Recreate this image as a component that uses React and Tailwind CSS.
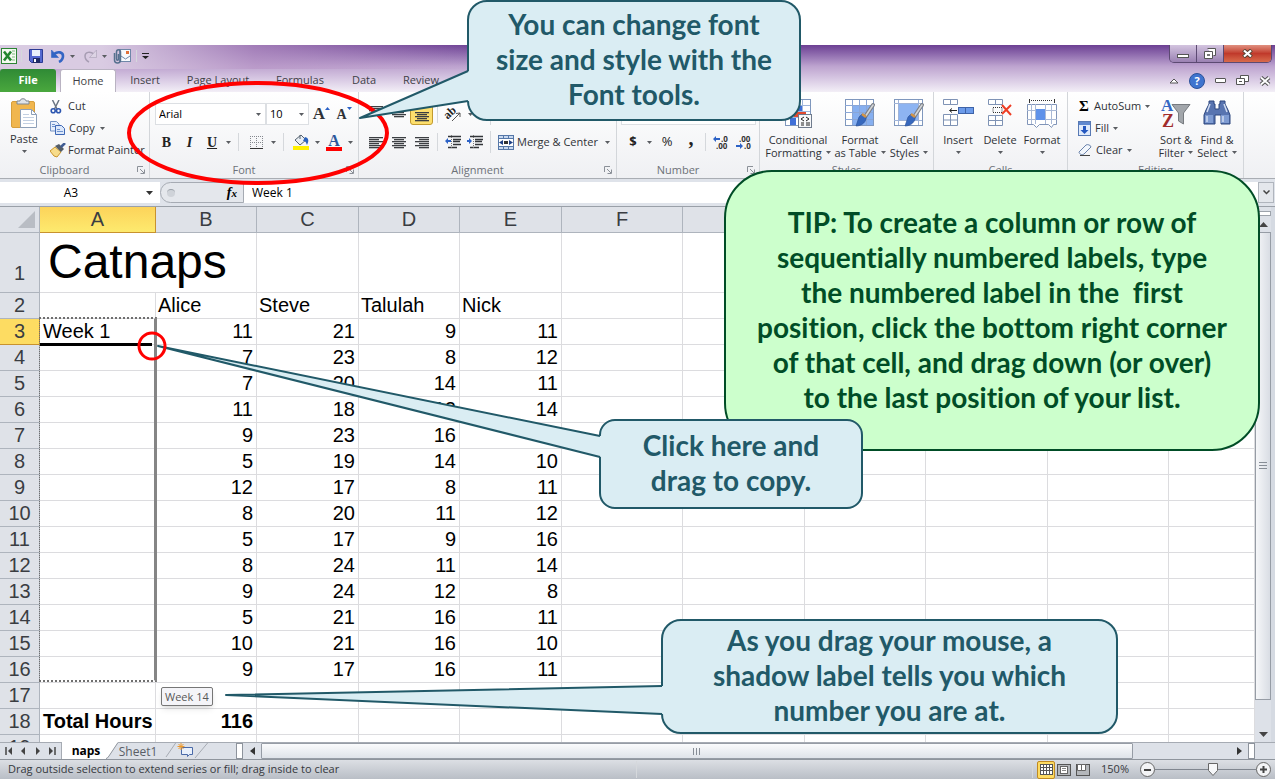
import React from 'react';

const Caret = ({ className = '' }) => (
  <svg className={'shrink-0 ' + className} width="5" height="3" viewBox="0 0 5 3" aria-hidden="true">
    <path d="M0 0h5L2.500 3z" fill="#5a5d62" />
  </svg>
);
const Sep = ({ className = '' }) => <span className={'w-px shrink-0 bg-[#d5d8dc] ' + className} />;

/* ---------- icons ---------- */
const ExcelIcon = () => (
  <svg width="16" height="16" viewBox="0 0 16 16">
    <rect x=".5" y=".5" width="15" height="15" fill="#f4faf1" stroke="#2c8434" />
    <path d="M11 3h3M11 6h3M11 9h3M11 12h3" stroke="#7fb97f" />
    <path d="M3 3.500l7 9M10 3.500l-7 9" stroke="#23862f" strokeWidth="2.600" />
  </svg>
);
const SaveIcon = () => (
  <svg width="14" height="14" viewBox="0 0 14 14">
    <path d="M.5.5h13v13h-11l-2-2z" fill="#5468d0" stroke="#2b3a94" />
    <rect x="3" y="1" width="8" height="6" fill="#e9f0fb" />
    <rect x="4" y="9" width="7" height="5" fill="#1f2b66" />
    <rect x="5" y="10" width="2" height="3" fill="#fff" />
  </svg>
);
const UndoIcon = ({ flip, color = '#3365c4' }) => (
  <svg width="14" height="14" viewBox="0 0 14 14">
    <g transform={flip ? 'translate(14 0) scale(-1 1)' : undefined}>
      <path d="M3 5c4-3 9-2 9 2 0 3-2 5-4 6" fill="none" stroke={color} strokeWidth={flip ? 1.500 : 2.600} />
      <path d="M.5 1v7.500h7z" fill={flip ? '#dcd3e4' : color} stroke={color} strokeWidth=".6" />
    </g>
  </svg>
);
const MailIcon = () => (
  <svg width="18" height="16" viewBox="0 0 18 16">
    <rect x="6.500" y="1.500" width="11" height="12" fill="#f6f9fd" stroke="#6f87a8" />
    <path d="M8 8l4.500 3L17 8" fill="none" stroke="#6f87a8" />
    <rect x="13" y="3" width="3" height="3" fill="#e0703a" />
    <path d="M1.500 5v7c0 4 6 4 6 0V4c0-3-4-3-4 0v7c0 1.500 2 1.500 2 0V6" fill="none" stroke="#56708e" strokeWidth="1.500" />
  </svg>
);
const PasteIcon = () => (
  <svg width="27" height="31" viewBox="0 0 27 31">
    <rect x=".5" y="3.500" width="23" height="26" rx="1.500" fill="#f0b64e" stroke="#d79f3c" />
    <path d="M6 6V3h3c0-3 6-3 6 0h3v3z" fill="#dfe4ea" stroke="#7f8791" />
    <path d="M9.500 11.500h11l5 5v13h-16z" fill="#fff" stroke="#8d9fb8" />
    <path d="M20.500 11.500v5h5" fill="none" stroke="#8d9fb8" />
    <path d="M12 16.500h6M12 19.500h11M12 22.500h11M12 25.500h11" fill="none" stroke="#c3d0e2" />
  </svg>
);
const CutIcon = () => (
  <svg width="12" height="14" viewBox="0 0 12 14">
    <path d="M2.500 0l4.500 9M9 0L4.500 9" stroke="#6b7684" strokeWidth="1.500" fill="none" />
    <circle cx="3.200" cy="10.800" r="2" fill="none" stroke="#2c56b0" strokeWidth="1.600" />
    <circle cx="8.500" cy="10.800" r="2" fill="none" stroke="#2c56b0" strokeWidth="1.600" />
  </svg>
);
const CopyIcon = () => (
  <svg width="15" height="14" viewBox="0 0 15 14">
    <path d="M.5.500h6l2.500 2.500v7h-8.500z" fill="#e6eefb" stroke="#7492c4" />
    <path d="M5.500 4.500h6l3 3v6h-9z" fill="#dbe7fa" stroke="#3d67b5" />
    <path d="M2 3.500h3M2 5.500h3M7 8.500h3M7 10.500h6" stroke="#6f93cf" />
  </svg>
);
const PainterIcon = () => (
  <svg width="16" height="15" viewBox="0 0 16 15">
    <path d="M0 8l5-4 6 5-4 5-3-1z" fill="#f7dc8b" stroke="#c9952d" />
    <path d="M5 3l6 6 3-3-5-5z" fill="#525c68" />
    <path d="M11 4l4-4" stroke="#3f5c94" strokeWidth="2.500" />
  </svg>
);
const BordersIcon = () => (
  <svg width="13" height="13" viewBox="0 0 13 13">
    <path d="M.5 0v13M6.500 0v13M12.500 0v13M0 .5h13M0 6.500h13" stroke="#84888e" strokeDasharray="1 1" />
    <path d="M0 12.500h13" stroke="#333" />
  </svg>
);
const BucketIcon = () => (
  <svg width="17" height="16" viewBox="0 0 17 16">
    <path d="M2 6l6-5 5 5-6 5z" fill="#e9eef4" stroke="#55626f" />
    <path d="M7 5V1" stroke="#55626f" />
    <path d="M12 3c4 1 4 4 2 8-1-2-1-4-4-4z" fill="#2b62bd" />
    <rect x="0" y="12" width="16" height="4" fill="#fff000" />
  </svg>
);
const Lines = ({ kind = 'left', rows = 6 }) => {
  const long = 14;
  const short = 10;
  return (
    <svg width="14" height="13" viewBox="0 0 14 13">
      {Array.from({ length: rows }, (_, i) => {
        const w = i % 2 ? short : long;
        const x = kind === 'left' ? 0 : kind === 'right' ? 14 - w : (14 - w) / 2;
        return <rect key={i} x={x} y={i * 2 + (rows < 6 ? 2 : 1)} width={w} height="1.300" fill="#3c3f43" />;
      })}
    </svg>
  );
};
const IndentIcon = ({ right }) => (
  <svg width="16" height="14" viewBox="0 0 16 14">
    <path d="M3 1.500h13M8 4.500h8M8 6.500h7M8 9.500h8M3 12.500h9" stroke="#33363a" strokeWidth="1.400" />
    <path d="M6.500 0v14" stroke="#777" strokeDasharray="1 1" />
    <path d={right ? 'M5 6L2 3v2H0v2h2v2z' : 'M0 6l3-3v2h3v2H3v2z'} fill="#2c62c6" />
  </svg>
);
const OrientIcon = () => (
  <svg width="17" height="16" viewBox="0 0 17 16" className="overflow-visible">
    <text x="-1" y="11" transform="rotate(-42 4 9)" fontFamily="Liberation Serif" fontWeight="bold" fontSize="12" fill="#222">ab</text>
    <path d="M6 15l8-8M14 7l-4 .5M14 7v4" stroke="#555" fill="none" />
  </svg>
);
const MergeIcon = () => (
  <svg width="16" height="15" viewBox="0 0 16 15">
    <rect x=".5" y=".5" width="15" height="14" fill="#c9d9f0" stroke="#5577a8" />
    <path d="M0 3.500h16M0 11.500h16M5.500 0v4M10.500 0v4M5.500 11v4M10.500 11v4" stroke="#5577a8" />
    <rect x="1" y="4" width="14" height="7" fill="#fff" />
    <path d="M1 7.500l4-2.500v5zM15 7.500l-4-2.500v5z" fill="#1c3f86" />
    <rect x="6" y="6" width="4" height="3" fill="#333" />
  </svg>
);
const Brush = () => (
  <g>
    <path d="M28 6L20 18" stroke="#7c8087" strokeWidth="4" strokeLinecap="round" />
    <path d="M28 6L20 18" stroke="#d2d5d9" strokeWidth="1.600" strokeLinecap="round" />
    <path d="M21 17l-4-2-3 3-3 9c5 0 9-3 10-7z" fill="#3768bd" stroke="#284f96" strokeWidth=".6" />
    <path d="M17 15l4 3" stroke="#d59545" strokeWidth="2.500" />
  </g>
);
const CondIcon = () => (
  <svg width="30" height="30" viewBox="0 0 30 30">
    <rect x="2.500" y=".5" width="25" height="26" fill="#fff" stroke="#7f97bd" />
    <path d="M3 6.500h24M3 12.500h24M3 18.500h24M10.500 1v25M19.500 1v25" stroke="#9fb6dc" />
    <rect x="11" y="7" width="8" height="5" fill="#3f6fd8" />
    <rect x="11" y="13" width="12" height="5" fill="#e2492f" />
    <rect x="7" y="19" width="6" height="7" fill="#3f6fd8" />
    <rect x="15.500" y="15.500" width="13" height="13" fill="#f6f7f9" stroke="#6f7b8d" />
    <path d="M21 18l-3 2 3 2M18 24h3M18 26h3M23 18l3 2-3 2M23 24h4M23 26h4" fill="none" stroke="#222" />
  </svg>
);
const FormatTableIcon = () => (
  <svg width="31" height="30" viewBox="0 0 31 30">
    <rect x=".5" y=".5" width="28" height="26" fill="#fff" stroke="#7f97bd" />
    <rect x="8" y="7" width="20" height="19" fill="#86aff0" />
    <path d="M0 6.500h28M0 13.500h28M0 20.500h28M7.500 1v25M14.500 1v25M21.500 1v25" stroke="#8aa6d6" />
    <Brush />
  </svg>
);
const CellStylesIcon = () => (
  <svg width="31" height="30" viewBox="0 0 31 30">
    <rect x=".5" y=".5" width="28" height="26" fill="#fff" stroke="#7f97bd" />
    <path d="M0 4.500h28M0 21.500h28M4.500 1v25M24.500 1v25" stroke="#9fb3d8" />
    <rect x="5" y="5" width="19" height="16" fill="#8db4f2" />
    <Brush />
  </svg>
);
const InsertIcon = () => (
  <svg width="31" height="28" viewBox="0 0 31 28">
    <path d="M.5.500h14v5h-14zM7.500.5v5M.5 15.500h14v11h-14zM7.500 15.500v11M.5 21h14" fill="#fff" stroke="#7f93b5" />
    <rect x="15.500" y="8.500" width="15" height="6" fill="#6c9bea" stroke="#3e63a8" />
    <path d="M22.500 8.500v6" stroke="#3e63a8" />
    <path d="M7 11.500h7M9 9.500l-2.500 2 2.500 2" stroke="#222" fill="none" />
  </svg>
);
const DeleteIcon = () => (
  <svg width="25" height="28" viewBox="0 0 25 28">
    <path d="M.5.500h14v5h-14zM7.500.5v5M.5 16.500h14v10h-14zM7.500 16.500v10M.5 21.500h14" fill="#fff" stroke="#7f93b5" />
    <path d="M5 8.500h9v5H5z" fill="none" stroke="#333" strokeDasharray="1 1" />
    <path d="M14 6l9 10M23 6l-9 9" stroke="#ee3d24" strokeWidth="2" />
  </svg>
);
const FormatIcon = () => (
  <svg width="31" height="30" viewBox="0 0 31 30">
    <path d="M2.500 0v4M27.500 0v4" stroke="#333" />
    <path d="M4 1.500h22" stroke="#333" strokeDasharray="1 1" />
    <path d="M.5 5.500h29v20h-3l-2 3-3-3h-9l-3 3-3-3h-6z" fill="#fff" stroke="#8094b8" />
    <path d="M0 11.500h30M0 20.500h30M8.500 5v20M18.500 5v20M24.500 5v20M4.500 5v20" stroke="#a9b9d6" />
    <rect x="9" y="10" width="9" height="11" fill="#5f92ea" />
  </svg>
);
const FillIcon = () => (
  <svg width="13" height="15" viewBox="0 0 13 15">
    <rect x=".5" y=".5" width="12" height="14" fill="#dfeafb" stroke="#5779b4" />
    <rect x="1" y="1" width="11" height="3" fill="#5f88cf" />
    <path d="M5 5h3v4h2.500l-4 4-4-4H5z" fill="#2457bf" />
  </svg>
);
const ClearIcon = () => (
  <svg width="14" height="12" viewBox="0 0 14 12">
    <path d="M1 8l7-7c1-1 5 0 5 2L6 10c-2 1.500-5 0-5-2z" fill="#f2f6fc" stroke="#6a83ab" />
    <path d="M2 11.500h10" stroke="#444" />
  </svg>
);
const SortIcon = () => (
  <svg width="31" height="30" viewBox="0 0 31 30" className="overflow-visible">
    <path d="M11 5.500h18l-6.500 8.500v11l-5-3v-8z" fill="#a2a6ab" stroke="#777b80" />
    <text x="0" y="12" fontFamily="Liberation Serif" fontWeight="bold" fontSize="17" fill="#3568c4">A</text>
    <text x="1" y="28" fontFamily="Liberation Serif" fontWeight="bold" fontSize="18" fill="#a12c2c">Z</text>
  </svg>
);
const FindIcon = () => (
  <svg width="28" height="27" viewBox="0 0 28 27">
    <path d="M6 2h5v3h1v5h4V5h1V2h5v3l3 6 2 5v9h-9v-9h-6v9H1v-9l2-5 3-6z" fill="#5874b0" stroke="#2c467f" />
    <rect x="2" y="16" width="8" height="8" fill="#7e9bd2" />
    <rect x="18" y="16" width="8" height="8" fill="#7e9bd2" />
    <path d="M7 5l-3 8M21 5l3 8M4 17v6M20 17v6" stroke="#d0dcf2" strokeWidth="1.500" />
  </svg>
);
const Launcher = () => (
  <svg width="8" height="8" viewBox="0 0 8 8">
    <path d="M.5 6V.5H6M3 3l4 4M7.500 3.500v4h-4" fill="none" stroke="#8b9098" />
  </svg>
);
const DecimalIcon = ({ inc }) => (
  <svg width="18" height="15" viewBox="0 0 18 15" className="overflow-visible">
    <text x={inc ? 8 : 3} y="7" fontFamily="Open Sans" fontWeight="bold" fontSize="8" fill="#333">{inc ? '.0' : '.00'}</text>
    <text x={inc ? 3 : 8} y="14" fontFamily="Open Sans" fontWeight="bold" fontSize="8" fill="#333">{inc ? '.00' : '.0'}</text>
    <path d={inc ? 'M0 4l3-3v2h4v2H3v2z' : 'M7 11L4 8v2H0v2h4v2z'} fill="#2c62c6" />
  </svg>
);

/* ---------- ribbon ---------- */
const Group = ({ label, className, children, launcher }) => (
  <section className={'flex shrink-0 flex-col border-r border-[#d3d6da] ' + className}>
    <div className="h-[70px] min-w-0">{children}</div>
    <div className={'relative h-[16px] text-center leading-[16px] text-[#6d7178] ' + (launcher ? 'pr-5' : '')}>
      {label}
      {launcher && (
        <button aria-label={label + ' settings'} className="absolute right-1 bottom-1">
          <Launcher />
        </button>
      )}
    </div>
  </section>
);
const Btn = ({ label, className = '', children }) => (
  <button aria-label={label} className={'flex h-[22px] shrink-0 items-center justify-center ' + className}>
    {children}
  </button>
);
const Big = ({ icon, lines, className }) => (
  <button className={'flex shrink-0 flex-col items-center leading-[13px] ' + className}>
    <span className="flex h-[34px] items-start justify-center">{icon}</span>
    <span className="whitespace-nowrap">{lines[0]}</span>
    <span className="flex h-[13px] items-center gap-1 whitespace-nowrap">
      {lines[1]}
      <Caret />
    </span>
  </button>
);
const Combo = ({ label, value, className }) => (
  <span className={'relative flex h-[22px] items-center border border-[#dcdfe3] bg-white ' + className}>
    <select aria-label={label} defaultValue={value} className="h-full w-full appearance-none bg-transparent pl-[3px] text-black outline-none">
      <option>{value}</option>
    </select>
    <Caret className="absolute right-1" />
  </span>
);

const Ribbon = () => (
  <div className="flex h-[87px] shrink-0 overflow-hidden border-b border-[#a9adb3] bg-linear-to-b from-white to-[#eff0f3] text-[11px] text-[#2f3237]">
    <Group label="Clipboard" launcher className="w-[150px]">
      <div className="flex pl-2 pt-1">
        <Big icon={<PasteIcon />} lines={['Paste', '']} className="w-8 pt-0.5" />
        <div className="flex flex-col pl-2.5">
          <button className="flex h-[21px] items-center gap-1.5"><CutIcon />Cut</button>
          <button className="flex h-[22px] items-center gap-1"><CopyIcon />Copy<Caret className="ml-px" /></button>
          <button className="flex h-[22px] items-center gap-0.5 whitespace-nowrap"><PainterIcon />Format Painter</button>
        </div>
      </div>
    </Group>

    <Group label="Font" launcher className="w-[209px]">
      <div className="flex flex-col gap-1.5 pl-[5px] pt-[11px]">
        <div className="flex">
          <Combo label="Font family" value="Arial" className="w-[111px]" />
          <Combo label="Font size" value="10" className="w-[43px]" />
          <Btn label="Grow font" className="w-[25px]">
            <span className="font-['Liberation_Serif',serif] text-[17px] font-bold">A</span>
            <svg width="5" height="3" className="mb-3"><path d="M0 3h5L2.500 0z" fill="#2c62c6" /></svg>
          </Btn>
          <Btn label="Shrink font" className="w-[20px]">
            <span className="font-['Liberation_Serif',serif] text-[14px] font-bold">A</span>
            <svg width="5" height="3" className="mb-3"><path d="M0 0h5L2.500 3z" fill="#2c62c6" /></svg>
          </Btn>
        </div>
        <div className="flex items-center font-['Liberation_Serif',serif] text-[14px] font-bold text-[#222]">
          <Btn label="Bold" className="w-[23px]">B</Btn>
          <Btn label="Italic" className="w-[23px] italic">I</Btn>
          <Btn label="Underline" className="w-[22px] underline">U</Btn>
          <Btn label="Underline options" className="w-[10px]"><Caret /></Btn>
          <Sep className="mx-[5px] h-[18px]" />
          <Btn label="Borders" className="w-[24px]"><BordersIcon /></Btn>
          <Btn label="Border options" className="w-[10px]"><Caret /></Btn>
          <Sep className="mx-[5px] h-[18px]" />
          <Btn label="Fill color" className="w-[24px]"><BucketIcon /></Btn>
          <Btn label="Fill options" className="w-[8px]"><Caret /></Btn>
          <Btn label="Font color" className="w-[26px]">
            <span className="border-b-[4px] border-[#f00] px-0.5 text-[16px] leading-[13px] text-[#2d569c]">A</span>
          </Btn>
          <Btn label="Color options" className="w-[6px]"><Caret /></Btn>
        </div>
      </div>
    </Group>

    <Group label="Alignment" launcher className="w-[258px]">
      <div className="flex flex-col gap-1.5 pl-[5px] pt-[11px]">
        <div className="flex items-center">
          <Btn label="Top align" className="w-[23px] pb-2"><Lines kind="center" rows={4} /></Btn>
          <Btn label="Middle align" className="w-[23px]"><Lines kind="center" rows={4} /></Btn>
          <Btn label="Bottom align" className="w-[23px] rounded-[3px] border border-[#c29a2e] bg-[#fddf6d] pt-1"><Lines kind="center" rows={5} /></Btn>
          <Sep className="mx-1 h-[18px]" />
          <Btn label="Orientation" className="w-[24px]"><OrientIcon /></Btn>
          <Btn label="Orientation options" className="w-[8px]"><Caret /></Btn>
          <Sep className="ml-4 h-[22px]" />
        </div>
        <div className="flex items-center">
          <Btn label="Align left" className="w-[23px]"><Lines kind="left" /></Btn>
          <Btn label="Align center" className="w-[23px]"><Lines kind="center" /></Btn>
          <Btn label="Align right" className="w-[23px]"><Lines kind="right" /></Btn>
          <Sep className="mx-1 h-[18px]" />
          <Btn label="Decrease indent" className="w-[22px]"><IndentIcon /></Btn>
          <Btn label="Increase indent" className="w-[22px]"><IndentIcon right /></Btn>
          <Sep className="mx-1 h-[22px]" />
          <button className="flex h-[22px] items-center gap-[3px] pl-[3px] whitespace-nowrap">
            <MergeIcon />Merge &amp; Center<Caret className="ml-1" />
          </button>
        </div>
      </div>
    </Group>

    <Group label="Number" launcher className="w-[143px]">
      <div className="flex flex-col gap-1.5 pl-1 pt-[11px]">
        <Combo label="Number format" value="" className="w-[135px]" />
        <div className="flex items-center text-[13px] text-[#222]">
          <Btn label="Currency" className="w-[24px] font-bold">$</Btn>
          <Btn label="Currency options" className="w-[8px]"><Caret /></Btn>
          <Btn label="Percent" className="w-[28px]">%</Btn>
          <Btn label="Comma" className="w-[20px] pb-2 font-['Liberation_Serif',serif] text-[20px] font-bold">,</Btn>
          <Sep className="mx-1 h-[18px]" />
          <Btn label="Increase decimal" className="w-[24px]"><DecimalIcon inc /></Btn>
          <Btn label="Decrease decimal" className="w-[22px]"><DecimalIcon /></Btn>
        </div>
      </div>
    </Group>

    <Group label="Styles" className="w-[174px]">
      <div className="flex pl-1 pt-[7px]">
        <Big icon={<CondIcon />} lines={['Conditional', 'Formatting']} className="w-[68px]" />
        <Big icon={<FormatTableIcon />} lines={['Format', 'as Table']} className="w-[56px]" />
        <Big icon={<CellStylesIcon />} lines={['Cell', 'Styles']} className="w-[42px]" />
      </div>
    </Group>

    <Group label="Cells" className="w-[134px]">
      <div className="flex pl-[3px] pt-[7px]">
        <Big icon={<InsertIcon />} lines={['Insert', '']} className="w-[42px]" />
        <Big icon={<DeleteIcon />} lines={['Delete', '']} className="w-[42px]" />
        <Big icon={<FormatIcon />} lines={['Format', '']} className="w-[42px]" />
      </div>
    </Group>

    <Group label="Editing" className="w-[176px]">
      <div className="flex pl-2.5">
        <div className="flex w-[78px] flex-col pt-[3px]">
          <button className="flex h-[22px] items-center gap-1 whitespace-nowrap">
            <span className="w-[12px] font-['Liberation_Serif',serif] text-[15px] font-bold text-black">Σ</span>AutoSum<Caret />
          </button>
          <button className="flex h-[22px] items-center gap-1"><FillIcon />Fill<Caret /></button>
          <button className="flex h-[22px] items-center gap-1"><ClearIcon />Clear<Caret /></button>
        </div>
        <Big icon={<SortIcon />} lines={['Sort &', 'Filter']} className="w-[40px] pt-[7px]" />
        <Big icon={<FindIcon />} lines={['Find &', 'Select']} className="w-[42px] pt-[7px]" />
      </div>
    </Group>
  </div>
);

/* ---------- window chrome ---------- */
const TitleBar = () => (
  <header className="h-[47px] shrink-0 bg-linear-to-b from-[#6c3f93] via-[#bda3cf] via-45% to-[#f3eff7] text-[11px] text-[#3f3f46]">
    <div className="flex h-[24px] items-start justify-between bg-linear-to-r from-[#d9cbe2] from-8% via-[#b795c6]/70 via-20% to-transparent to-38%">
      <div className="flex h-[22px] items-center pl-px">
        <ExcelIcon />
        <Sep className="ml-1 h-3 bg-[#8e7ba3]" />
        <Btn label="Save" className="ml-1.5 w-4"><SaveIcon /></Btn>
        <Btn label="Undo" className="ml-1.5 w-4"><UndoIcon /></Btn>
        <Btn label="Undo history" className="w-3"><Caret /></Btn>
        <Btn label="Redo" className="ml-1 w-4"><UndoIcon flip color="#a79db3" /></Btn>
        <Btn label="Redo history" className="w-3"><Caret /></Btn>
        <Btn label="E-mail" className="ml-0.5 w-5"><MailIcon /></Btn>
        <Sep className="ml-1 h-3 bg-[#6d5b80]" />
        <Btn label="Customize" className="ml-0.5 w-3">
          <svg width="7" height="6"><path d="M0 .5h7" stroke="#222" /><path d="M0 3h7L3.500 6z" fill="#222" /></svg>
        </Btn>
      </div>
      <div className="mr-[3px] flex h-[18px] overflow-hidden rounded-b-[5px] border border-t-0 border-[#5c4a72]">
        <button aria-label="Minimize" className="flex w-[27px] items-center justify-center border-r border-[#5c4a72] bg-linear-to-b from-[#d3c4df] to-[#9b82b3]">
          <span className="mt-1 h-[4px] w-[12px] border border-[#555] bg-white" />
        </button>
        <button aria-label="Restore" className="flex w-[27px] items-center justify-center border-r border-[#5c4a72] bg-linear-to-b from-[#d3c4df] to-[#9b82b3]">
          <svg width="12" height="11"><path d="M3.500.5h8v7h-2M.5 3.500h8v7h-8z" fill="#fff" stroke="#555" /><rect x="3" y="6" width="3" height="2" fill="#777" /></svg>
        </button>
        <button aria-label="Close" className="flex w-[47px] items-center justify-center bg-linear-to-b from-[#e09080] via-[#c0392b] to-[#d86a4c]">
          <svg width="11" height="9" viewBox="0 0 11 9"><path d="M1.500 1l8 7M9.500 1l-8 7" stroke="#543" strokeWidth="4" /><path d="M2 1.500l7 6M9 1.500l-7 6" stroke="#fff" strokeWidth="2.200" /></svg>
        </button>
      </div>
    </div>
    <nav className="flex h-[23px] items-stretch">
      <button className="w-[56px] rounded-t-[3px] bg-linear-to-b from-[#2f8a35] to-[#4aa83e] font-bold text-white">File</button>
      <button className="ml-1 w-[56px] rounded-t-[3px] border border-b-0 border-[#b9b3c2] bg-white">Home</button>
      <button className="w-[58px]">Insert</button>
      <button className="w-[88px] whitespace-nowrap">Page Layout</button>
      <button className="w-[76px]">Formulas</button>
      <button className="w-[52px]">Data</button>
      <button className="w-[62px]">Review</button>
      <div className="ml-auto flex items-center gap-2 pr-1">
        <svg width="10" height="6" className="mr-0.5"><path d="M1 5l4-4 4 4z" fill="#fff" stroke="#555" /></svg>
        <button aria-label="Help" className="h-[16px] w-[16px] rounded-full border border-[#2c5299] bg-[#3f74cf] text-[11px] leading-[13px] font-bold text-white">?</button>
        <span className="ml-0.5 h-[5px] w-[11px] rounded-[1px] border border-[#555] bg-white" />
        <svg width="13" height="11" className="ml-0.5"><path d="M4.500.5h8v6h-8z" fill="#fff" stroke="#555" /><path d="M.5 3.500h8v6h-8z" fill="#fff" stroke="#555" /><path d="M3 6.500h3" stroke="#555" /></svg>
        <svg width="12" height="10" viewBox="0 0 12 10" className="ml-0.5"><path d="M2 1.500l8 7M10 1.500l-8 7" stroke="#555" strokeWidth="4" /><path d="M2 1.500l8 7M10 1.500l-8 7" stroke="#fff" strokeWidth="1.800" /></svg>
      </div>
    </nav>
  </header>
);

const FormulaBar = () => (
  <div className="flex h-[28px] shrink-0 border-b border-[#9aa0a8] bg-[#dfe3ea] py-[3px] text-[12px] text-black">
    <div className="relative flex w-[160px] items-center bg-white">
      <input aria-label="Name box" defaultValue="A3" className="w-[142px] bg-transparent text-center outline-none" />
      <svg width="7" height="4" className="absolute right-[7px]"><path d="M0 0h7L3.500 4z" fill="#333" /></svg>
    </div>
    <div className="flex w-[84px] items-center justify-between rounded-l-full border border-[#a6abb3] bg-[#e4e7ec] pr-1.5 pl-1.5">
      <span className="h-2 w-2 rounded-full border-t border-[#9aa0a8] bg-[#cfd3d9]" />
      <span className="font-['Liberation_Serif',serif] text-[14px] font-bold italic">
        f<span className="text-[11px]">x</span>
      </span>
    </div>
    <input aria-label="Formula" defaultValue="Week 1" className="min-w-0 flex-1 bg-white pl-2 outline-none" />
    <button aria-label="Expand formula bar" className="mr-px flex w-[16px] items-center justify-center border border-[#b0b5bd] bg-[#e4e7ec]">
      <svg width="7" height="5"><path d="M.5.500l3 3 3-3" fill="none" stroke="#444" strokeWidth="1.500" /></svg>
    </button>
  </div>
);

/* ---------- sheet ---------- */
const columns = ['A', 'B', 'C', 'D', 'E', 'F', '', '', '', '', ''];
const weeks = [
  [11, 21, 9, 11],
  [7, 23, 8, 12],
  [7, 20, 14, 11],
  [11, 18, 12, 14],
  [9, 23, 16, ''],
  [5, 19, 14, 10],
  [12, 17, 8, 11],
  [8, 20, 11, 12],
  [5, 17, 9, 16],
  [8, 24, 11, 14],
  [9, 24, 12, 8],
  [5, 21, 16, 11],
  [10, 21, 16, 10],
  [9, 17, 16, 11],
];
const cell = 'h-[26px] overflow-hidden whitespace-nowrap border-r border-b border-[#dcdcdf] p-0';
const rowHead = 'h-[26px] border-r border-b p-0 text-center align-bottom font-normal text-[#3a3d42]';
const plainHead = rowHead + ' border-[#aeb4bd] bg-[#dfe2e8]';
const activeHead = rowHead + ' border-[#c8922e] bg-[#fddc62]';
const blanks = (n) => Array.from({ length: n }, (_, i) => <td key={'e' + i} className={cell} />);

const Sheet = () => (
  <table className="w-full table-fixed border-separate border-spacing-0 bg-white font-['Liberation_Sans',Arial,sans-serif] text-[20px] leading-[25px] text-black">
    <colgroup>
      <col className="w-[40px]" />
      <col className="w-[116px]" />
      <col className="w-[101px]" />
      <col className="w-[102px]" />
      <col className="w-[101px]" />
      <col className="w-[102px]" />
      <col className="w-[121px]" />
      <col className="w-[122px]" />
      <col className="w-[121px]" />
      <col className="w-[122px]" />
      <col className="w-[121px]" />
      <col />
    </colgroup>
    <thead>
      <tr className="bg-[#dfe2e8] text-[#3a3d42]">
        <th className="h-[26px] border-r border-b border-[#aeb4bd] p-0">
          <svg width="17" height="17" className="ml-auto mr-1"><path d="M17 0v17H0z" fill="#b9bdc4" /></svg>
        </th>
        {columns.map((c, i) => (
          <th
            key={i}
            className={
              i === 0
                ? 'border-r border-b border-[#c8922e] bg-linear-to-b from-[#fcd35a] to-[#fdea6e] p-0 font-normal'
                : 'border-r border-b border-[#aeb4bd] p-0 font-normal'
            }
          >
            {c}
          </th>
        ))}
      </tr>
    </thead>
    <tbody>
      <tr>
        <th className={plainHead + ' pb-1.5'}>1</th>
        <td colSpan={2} className={cell + ' pb-px pl-2 text-[48px] leading-[58px]'}>Catnaps</td>
        {blanks(9)}
      </tr>
      <tr>
        <th className={plainHead}>2</th>
        <td className={cell} />
        {['Alice', 'Steve', 'Talulah', 'Nick'].map((n) => (
          <td key={n} className={cell + ' pl-[2px]'}>{n}</td>
        ))}
        {blanks(6)}
      </tr>
      {weeks.map((w, i) => (
        <tr key={i}>
          <th className={i === 0 ? activeHead : plainHead}>{i + 3}</th>
          <td className={cell + ' pl-[3px]'}>{i === 0 ? 'Week 1' : ''}</td>
          {w.map((v, k) => (
            <td key={k} className={cell + ' pr-[3px] text-right'}>{v}</td>
          ))}
          {blanks(6)}
        </tr>
      ))}
      <tr>
        <th className={plainHead}>17</th>
        {blanks(11)}
      </tr>
      <tr>
        <th className={plainHead}>18</th>
        <td className={cell + ' pl-[3px] font-bold'}>Total Hours</td>
        <td className={cell + ' pr-[3px] text-right font-bold'}>116</td>
        {blanks(9)}
      </tr>
      <tr>
        <th className={plainHead}>19</th>
        {blanks(11)}
      </tr>
    </tbody>
  </table>
);

const VerticalScroll = () => (
  <div className="flex w-[20px] shrink-0 flex-col border-r-4 border-[#d5dae2] bg-[#dde1e8]">
    <div className="mt-1 h-[5px] border border-[#9da3ab] bg-white" />
    <button aria-label="Scroll up" className="flex h-[16px] items-center justify-center">
      <svg width="9" height="5"><path d="M0 5h9L4.500 0z" fill="#444" /></svg>
    </button>
    <div className="flex flex-1 items-center justify-center border border-[#969ca5] bg-linear-to-r from-[#f6f7f9] to-[#d9dde4]">
      <svg width="8" height="8"><path d="M0 .5h8M0 3.500h8M0 6.500h8" stroke="#878d96" /></svg>
    </div>
    <div className="h-[26px]" />
    <button aria-label="Scroll down" className="flex h-[16px] items-center justify-center">
      <svg width="9" height="5"><path d="M0 0h9L4.500 5z" fill="#444" /></svg>
    </button>
  </div>
);

const SheetTabs = () => (
  <div className="flex h-[17px] shrink-0 bg-[#dde1e8] text-[12px] leading-[15px]">
    <div className="flex w-[62px] items-center justify-around border-t border-r border-[#a6abb3] px-0.5">
      <svg width="8" height="8"><path d="M1 0v8" stroke="#444" strokeWidth="1.500" /><path d="M7 0v8L3 4z" fill="#444" /></svg>
      <svg width="8" height="8"><path d="M6 0v8L2 4z" fill="#444" /></svg>
      <svg width="8" height="8"><path d="M2 0v8l4-4z" fill="#444" /></svg>
      <svg width="8" height="8"><path d="M7 0v8" stroke="#444" strokeWidth="1.500" /><path d="M1 0v8l4-4z" fill="#444" /></svg>
    </div>
    <button className="w-[44px] bg-white pl-1 font-bold text-black">naps</button>
    <svg width="12" height="17" viewBox="0 0 12 17"><path d="M0 0h12L3 14q-2 3-3 3z" fill="#fff" /><path d="M12 .5L3 14q-2 3-3 2.500" fill="none" stroke="#8f959d" /></svg>
    <button className="w-[40px] border-t border-[#a6abb3] text-[#5a5e66]">Sheet1</button>
    <svg width="50" height="17" viewBox="0 0 50 17">
      <path d="M0 .5h50M18 .5L8 15M50 .5L37 16" fill="none" stroke="#a6abb3" />
      <path d="M23.500 5.500h11v7h-3l-2 2v-2h-6z" fill="#e9f0fb" stroke="#4a6aa8" />
      <path d="M23 1v7M19.500 4.500h7M20.500 2l5 5M25.500 2l-5 5" stroke="#ee9a2c" />
    </svg>
    <div className="flex-1 border-t border-[#a6abb3]" />
    <div className="flex w-[1039px] shrink-0 border-t border-[#a6abb3]">
      <span className="w-[7px] border border-[#8d939c] bg-white" />
      <button aria-label="Scroll left" className="flex w-[18px] items-center justify-center"><svg width="5" height="8"><path d="M5 0v8L0 4z" fill="#333" /></svg></button>
      <div className="flex w-[872px] items-center justify-center rounded-[1px] border border-[#969ca5] bg-linear-to-b from-[#fafbfc] to-[#dfe3e9]">
        <svg width="9" height="7"><path d="M.5 0v7M3.500 0v7M6.500 0v7" stroke="#878d96" /></svg>
      </div>
      <div className="flex-1" />
      <button aria-label="Scroll right" className="flex w-[18px] items-center justify-center"><svg width="5" height="8"><path d="M0 0v8l5-4z" fill="#333" /></svg></button>
      <span className="mr-[20px] w-[7px] border border-[#8d939c] bg-white" />
    </div>
  </div>
);

const StatusBar = () => (
  <footer className="flex h-[20px] shrink-0 items-center border-t border-[#8f959d] bg-linear-to-b from-[#dcdfe4] to-[#b9bec6] text-[11px] text-[#35383d]">
    <span className="w-[636px] whitespace-nowrap pl-2">Drag outside selection to extend series or fill; drag inside to clear</span>
    <Sep className="h-[17px] bg-[#9aa0a8]" />
    <div className="ml-auto flex items-center">
      <Sep className="mr-1 h-[17px] bg-[#9aa0a8]" />
      <button aria-label="Normal view" className="flex h-[18px] w-[18px] items-center justify-center rounded-[2px] border border-[#c08a22] bg-[#fddb62]">
        <svg width="13" height="11"><rect x=".5" y=".5" width="12" height="10" fill="#fff" stroke="#555" /><path d="M0 3.500h13M0 6.500h13M3.500 0v11M6.500 0v11M9.500 0v11" stroke="#555" /></svg>
      </button>
      <button aria-label="Page layout view" className="ml-0.5"><svg width="14" height="12"><rect x=".5" y=".5" width="13" height="11" fill="#b4b7bb" stroke="#555" /><rect x="3.500" y="2.500" width="7" height="7" fill="#fff" stroke="#666" /><path d="M5 4.500h4M5 6.500h4" stroke="#888" /></svg></button>
      <button aria-label="Page break view" className="ml-[5px]"><svg width="14" height="12"><rect x=".5" y=".5" width="13" height="11" fill="#b4b7bb" stroke="#555" /><path d="M1.500.5h4v6h-4zM5.500.5h4v6h-4z" fill="#fff" stroke="#666" /></svg></button>
      <span className="w-[50px] text-center">150%</span>
      <button aria-label="Zoom out" className="flex h-[15px] w-[15px] items-center justify-center rounded-full border border-[#666] bg-[#f3f4f6]"><span className="h-[2px] w-[7px] bg-[#444]" /></button>
      <div className="relative flex w-[101px] items-center">
        <span className="h-px w-full bg-[#80868f]" />
        <svg width="10" height="13" className="absolute left-[53px]"><path d="M.5.500h9v7l-4.500 5-4.500-5z" fill="#f6f7f9" stroke="#666" /></svg>
      </div>
      <button aria-label="Zoom in" className="mr-1 flex h-[15px] w-[15px] items-center justify-center rounded-full border border-[#666] bg-[#f3f4f6]">
        <svg width="7" height="7"><path d="M0 3.500h7M3.500 0v7" stroke="#444" strokeWidth="2" /></svg>
      </button>
    </div>
  </footer>
);

/* ---------- annotations floating over the window ---------- */
const note = 'absolute flex flex-col items-center justify-center whitespace-nowrap border-2 pb-0.5 text-center font-[Lato,sans-serif] text-[28px] leading-[35px] font-bold [font-variant-ligatures:none]';
const teal = ' border-[#215968] bg-[#daedf3] text-[#215968]';

/* The fill runs over the box border so that the pointer opens into the box. */
const Tail = ({ fill, line, className, width, height }) => (
  <svg className={'absolute ' + className} width={width} height={height} aria-hidden="true">
    <path d={fill} fill="#daedf3" />
    <path d={line} fill="none" stroke="#215968" strokeWidth="2" strokeLinejoin="round" />
  </svg>
);

const Annotations = () => (
  <>
    {/* selection being dragged */}
    <div className="absolute top-[317px] left-[39px] h-[365px] w-[118px] border-2 border-r-3 border-l-1 border-dotted border-[#6f6f6f] border-r-[#858585] [border-right-style:solid]" />
    <div className="absolute top-[343px] left-[40px] h-[3px] w-[112px] bg-black" />
    <div className="absolute top-[687px] left-[161px] h-[19px] rounded-[2px] border border-[#767676] bg-[#f4f4f8] px-[3px] text-[11px] leading-[17px] whitespace-nowrap text-[#575757] shadow-md">Week 14</div>

    <svg className="absolute top-[80px] left-[126px]" width="266" height="106" aria-hidden="true">
      <ellipse cx="132" cy="53" rx="129" ry="50" fill="none" stroke="#f00" strokeWidth="4" />
    </svg>

    <div className={note + ' top-[170px] left-[724px] h-[281px] w-[536px] rounded-[48px] border-[#004d26] bg-[#ccffcc] text-[#004d26]'}>
      <span>TIP: To create a column or row of</span>
      <span>sequentially numbered labels, type</span>
      <span className="whitespace-pre">the numbered label in the  first</span>
      <span>position, click the bottom right corner</span>
      <span>of that cell, and drag down (or over)</span>
      <span>to the last position of your list.</span>
    </div>

    <div className={note + teal + ' top-0 left-[467px] h-[121px] w-[334px] rounded-[20px]'}>
      <span>You can change font</span>
      <span>size and style with the</span>
      <span>Font tools.</span>
    </div>
    <Tail className="top-[60px] left-[350px]" width="120" height="70" fill="M119 11L10 58L119 41z" line="M118 11L10 58L118 41" />

    <div className={note + teal + ' top-[419px] left-[599px] h-[90px] w-[264px] rounded-[16px]'}>
      <span>Click here and</span>
      <span>drag to copy.</span>
    </div>
    <Tail className="top-[340px] left-[150px]" width="452" height="130" fill="M451 96L8 6L451 117z" line="M450 96L8 6L450 117" />

    <div className={note + teal + ' top-[619px] left-[661px] h-[115px] w-[457px] rounded-[20px]'}>
      <span>As you drag your mouse, a</span>
      <span>shadow label tells you which</span>
      <span>number you are at.</span>
    </div>
    <Tail className="top-[680px] left-[220px]" width="444" height="40" fill="M443 6L6 15L443 34z" line="M442 6L6 15L442 34" />

    <svg className="absolute top-[330px] left-[136px]" width="32" height="32" aria-hidden="true">
      <circle cx="16" cy="16" r="13" fill="none" stroke="#f00" strokeWidth="3" />
    </svg>
  </>
);

export default function App() {
  return (
    <main className="relative flex h-screen w-full flex-col overflow-hidden bg-white pt-[45px] font-['Open_Sans',sans-serif]">
      <TitleBar />
      <Ribbon />
      <FormulaBar />
      <div className="flex min-h-0 flex-1 overflow-hidden">
        <div className="min-w-0 flex-1 overflow-hidden">
          <Sheet />
        </div>
        <VerticalScroll />
      </div>
      <SheetTabs />
      <StatusBar />
      <Annotations />
    </main>
  );
}
